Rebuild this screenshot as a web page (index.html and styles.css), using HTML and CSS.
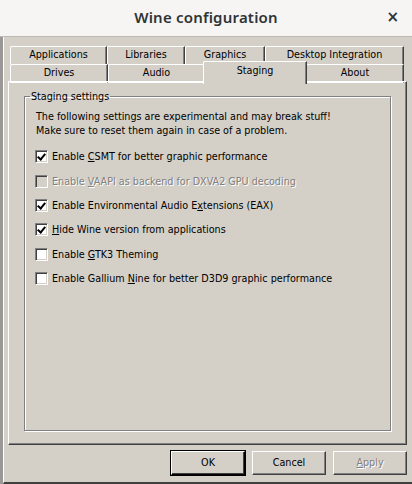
FILE: index.html
```html
<!DOCTYPE html>
<html>
<head>
<meta charset="utf-8">
<link rel="stylesheet" href="styles.css">
</head>
<body>
<div class="win">
  <div class="titlebar">
    <div class="title">Wine configuration</div>
    <div class="close">×</div>
  </div>
  <div class="body">
    <div class="tabstrip">
      <div class="row back">
        <div class="tab w-app">Applications</div>
        <div class="tab w-lib">Libraries</div>
        <div class="tab w-gfx">Graphics</div>
        <div class="tab w-desk">Desktop Integration</div>
      </div>
      <div class="row front">
        <div class="tab w-drv">Drives</div>
        <div class="tab w-aud">Audio</div>
        <div class="tab sel w-stg">Staging</div>
        <div class="tab w-abt">About</div>
      </div>
    </div>
    <div class="panel">
      <fieldset class="group">
        <legend>Staging settings</legend>
        <p class="intro">The following settings are experimental and may break stuff!<br>Make sure to reset them again in case of a problem.</p>
        <div class="opts">
          <label class="opt"><span class="cb on"></span><span>Enable <u>C</u>SMT for better graphic performance</span></label>
          <label class="opt dis"><span class="cb"></span><span>Enable <u>V</u>AAPI as backend for DXVA2 GPU decoding</span></label>
          <label class="opt"><span class="cb on"></span><span>Enable Environmental Audio E<u>x</u>tensions (EAX)</span></label>
          <label class="opt"><span class="cb on"></span><span><u>H</u>ide Wine version from applications</span></label>
          <label class="opt"><span class="cb"></span><span>Enable <u>G</u>TK3 Theming</span></label>
          <label class="opt"><span class="cb"></span><span>Enable Gallium <u>N</u>ine for better D3D9 graphic performance</span></label>
        </div>
      </fieldset>
    </div>
    <div class="buttons">
      <div class="btn def">OK</div>
      <div class="btn">Cancel</div>
      <div class="btn dis"><u>A</u>pply</div>
    </div>
  </div>
</div>
</body>
</html>
```
FILE: styles.css
```css
* { box-sizing: border-box; }
html, body { margin: 0; padding: 0; }
body {
  width: 412px; height: 484px; overflow: hidden;
  background: #9a9896;
  font-family: "DejaVu Sans Condensed", "DejaVu Sans", sans-serif;
  font-size: 10.7px; color: #000;
}
.win { width: 412px; height: 484px; display: flex; flex-direction: column; }
.titlebar {
  height: 37px; flex: none;
  background: #f6f5f4;
  border-bottom: 1px solid #bdbab6;
  display: flex; align-items: center; justify-content: center;
  position: relative;
}
.title {
  font-family: "Noto Sans", "Open Sans", sans-serif;
  font-weight: 600; font-size: 15px; color: #2e3436;
  margin-top: -3px; letter-spacing: 0.2px;
}
.close {
  position: absolute; right: 13px; top: 8px;
  font-family: "DejaVu Sans", sans-serif; font-weight: bold;
  font-size: 15px; color: #2e3436;
}
.body {
  flex: 1; background: #d4d0c8;
  margin-left: 3px;
  border-left: 1px solid #ffffff;
  border-bottom: 2px solid #404040;
  padding: 0 5px 0 4px;
  display: flex; flex-direction: column;
}
.tabstrip { padding: 9px 2px 0 2px; }
.row { display: flex; height: 18px; }
.tab {
  background: #d4d0c8;
  border-top: 1px solid #ffffff;
  border-left: 1px solid #ffffff;
  border-right: 1px solid #404040;
  box-shadow: inset -1px 0 0 #808080;
  text-align: center; line-height: 16px;
  border-top-left-radius: 2px;
}
.w-app { width: 97px; } .w-lib { width: 78px; } .w-gfx { width: 80px; } .w-desk { width: 139px; }
.w-drv { width: 98px; } .w-aud { width: 97px; } .w-stg { width: 101px; } .w-abt { width: 98px; }
.front .tab { border-bottom: 1px solid #ffffff; height: 19px; }
.tab.sel {
  height: 23px; margin-top: -3px; margin-left: -2px; margin-right: -1px; width: 104px;
  border-bottom: none; position: relative; z-index: 2;
  line-height: 18px;
}
.panel {
  height: 364px; flex: none;
  margin-top: -1px;
  border-top: 1px solid #ffffff;
  border-left: 1px solid #ffffff;
  border-right: 1px solid #404040;
  border-bottom: 1px solid #404040;
  box-shadow: inset -1px -1px 0 #808080;
  padding: 8px 15px 0 15px;
}
.group {
  margin: 0; height: 341px;
  border: 1px solid #808080;
  box-shadow: 1px 1px 0 #ffffff, inset 1px 1px 0 #ffffff;
  padding: 4px 10px 0 10px;
}
.group legend { padding: 0 1px; margin-left: -5px; line-height: 13px; }
.intro { margin: 3px 0 0 1px; line-height: 14px; }
.opts { margin-top: 12px; display: flex; flex-direction: column; gap: 10.9px; }
.opt { display: flex; align-items: center; gap: 4px; height: 13.5px; }
.opt u, .btn u { text-decoration: underline; }
.cb {
  width: 13px; height: 13px; flex: none; background: #fff;
  border-top: 1px solid #808080; border-left: 1px solid #808080;
  border-right: 1px solid #ffffff; border-bottom: 1px solid #ffffff;
  box-shadow: inset 1px 1px 0 #404040, inset -1px -1px 0 #d4d0c8;
  position: relative;
}
.cb.on::after {
  content: ""; position: absolute; left: 3px; top: 1px;
  width: 3px; height: 6px;
  border-right: 2px solid #000; border-bottom: 2px solid #000;
  transform: rotate(40deg);
}
.opt.dis { color: #808080; text-shadow: 1px 1px 0 #fff; }
.opt.dis .cb { background: #d4d0c8; }
.buttons { display: flex; justify-content: flex-end; gap: 7px; padding-top: 6px; padding-right: 0; }
.btn {
  width: 74px; height: 24px; text-align: center; line-height: 22px;
  border-top: 1px solid #ffffff; border-left: 1px solid #ffffff;
  border-right: 1px solid #404040; border-bottom: 1px solid #404040;
  box-shadow: inset -1px -1px 0 #808080;
}
.btn.def { outline: 1px solid #000; box-shadow: inset -1px -1px 0 #404040; border-right-color: #000; border-bottom-color: #000; }
.btn.dis { color: #808080; text-shadow: 1px 1px 0 #fff; }
```
